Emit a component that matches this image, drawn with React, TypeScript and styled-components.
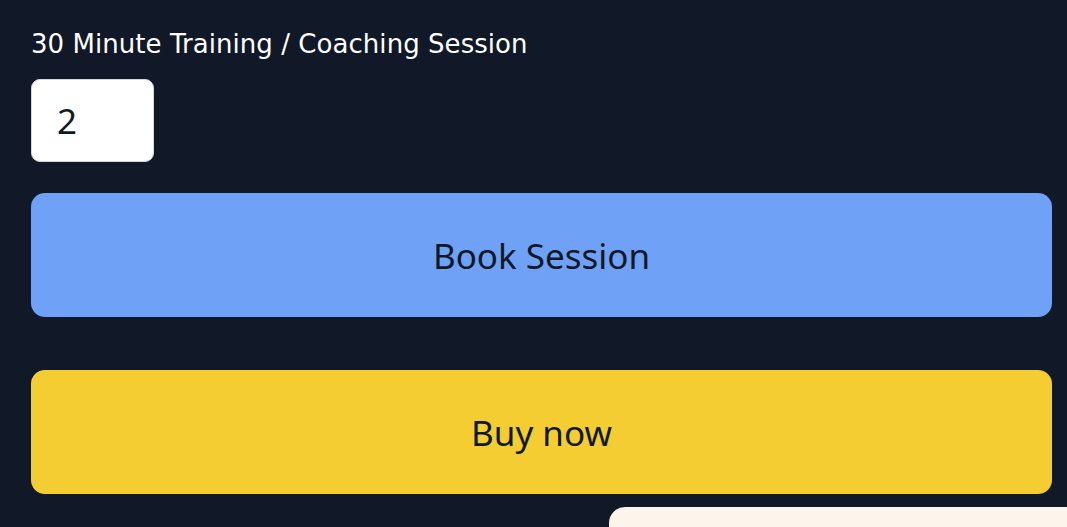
import React from "react";
import styled, { createGlobalStyle } from "styled-components";

const Global = createGlobalStyle`
  html, body { margin: 0; padding: 0; background: #111828; overflow: hidden; }
  body { font-family: "Noto Sans", "DejaVu Sans", sans-serif; }
`;

const Page = styled.div`
  width: 1067px;
  height: 527px;
  box-sizing: border-box;
  padding: 26px 15px 0 31px;
  display: flex;
  flex-direction: column;
  align-items: flex-start;
  overflow: hidden;
  & > * { flex-shrink: 0; }
`;

const Label = styled.label`
  color: #ffffff;
  font-family: "DejaVu Sans", sans-serif;
  font-size: 26px;
  line-height: 36px;
  letter-spacing: 0.05px;
`;

const QtyInput = styled.input`
  margin-top: 17px;
  width: 123px;
  height: 83px;
  box-sizing: border-box;
  border: 1px solid #d4d7dd;
  border-radius: 9px;
  background: #ffffff;
  padding: 0 0 0 25px;
  font-family: "Noto Sans", sans-serif;
  font-size: 35px;
  color: #111827;
  outline: none;
`;

const ActionButton = styled.button<{ $bg: string; $gap: number }>`
  margin-top: ${(p) => p.$gap}px;
  width: 100%;
  height: 124px;
  border: none;
  border-radius: 14px;
  background: ${(p) => p.$bg};
  color: #111827;
  font-family: "Noto Sans", sans-serif;
  font-size: 35px;
  cursor: pointer;
`;

const Panel = styled.div`
  margin-top: 13px;
  margin-left: 578px;
  width: 500px;
  height: 80px;
  background: #fdf5eb;
  border-radius: 16px;
`;

export default function App() {
  return (
    <>
      <Global />
      <Page>
        <Label>30 Minute Training / Coaching Session</Label>
        <QtyInput type="number" defaultValue={2} />
        <ActionButton $bg="#6fa1f7" $gap={31}>Book Session</ActionButton>
        <ActionButton $bg="#f3cd31" $gap={53}>Buy now</ActionButton>
        <Panel />
      </Page>
    </>
  );
}
